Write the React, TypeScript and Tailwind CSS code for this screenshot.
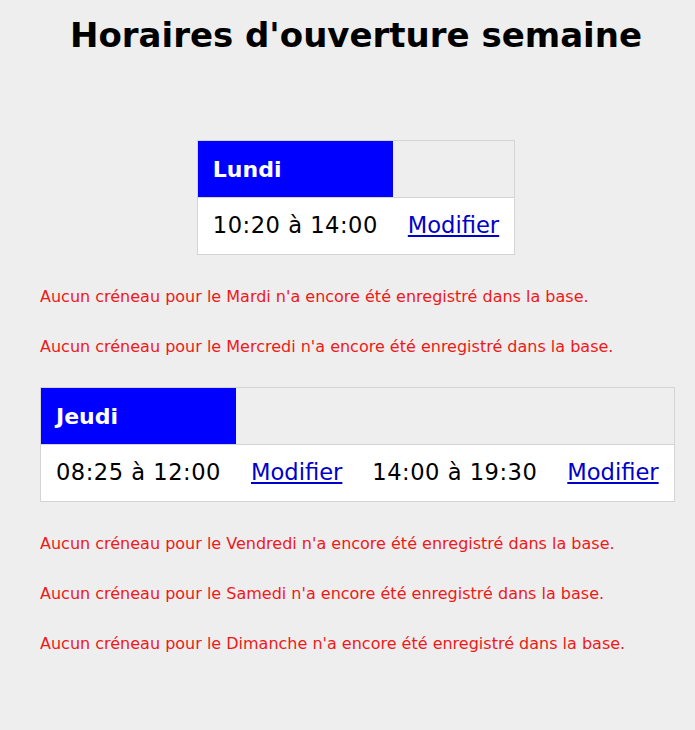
type Creneau = { debut: string; fin: string }

type Jour = { nom: string; creneaux: Creneau[] }

const jours: Jour[] = [
  { nom: 'Lundi', creneaux: [{ debut: '10:20', fin: '14:00' }] },
  { nom: 'Mardi', creneaux: [] },
  { nom: 'Mercredi', creneaux: [] },
  {
    nom: 'Jeudi',
    creneaux: [
      { debut: '08:25', fin: '12:00' },
      { debut: '14:00', fin: '19:30' },
    ],
  },
  { nom: 'Vendredi', creneaux: [] },
  { nom: 'Samedi', creneaux: [] },
  { nom: 'Dimanche', creneaux: [] },
]

// ─── Tableau d'un jour ────────────────────────────────────────────────────────

function TableJour({ jour }: { jour: Jour }) {
  const nbCols = jour.creneaux.length * 2
  return (
    <table className="mx-auto border-collapse border border-[#d4d4d4]">
      <thead>
        <tr>
          <th className="h-[57px] bg-[#0000ff] px-[15px] text-left text-[22px] font-bold text-white">
            {jour.nom}
          </th>
          <td colSpan={nbCols - 1} />
        </tr>
      </thead>
      <tbody>
        <tr className="border-t border-[#d4d4d4] bg-white">
          {jour.creneaux.flatMap((c) => [
            <td
              key={c.debut}
              className="h-[57px] whitespace-nowrap px-[15px] text-[22.6px] tracking-[0.5px] text-black"
            >
              {c.debut} à {c.fin}
            </td>,
            <td key={c.debut + '-m'} className="h-[57px] px-[15px] text-[22.6px]">
              <a href="#" className="text-[#0000cc] underline">
                Modifier
              </a>
            </td>,
          ])}
        </tr>
      </tbody>
    </table>
  )
}

export default function App() {
  return (
    <div className="min-h-[730px] bg-[#eeeeee] pl-[40px] pr-[23px] font-['DejaVu_Sans',sans-serif]">
      <h1 className="pt-[13px] text-center text-[34px] font-bold leading-[44px] text-black">
        Horaires d'ouverture semaine
      </h1>

      <div className="mt-[83px] flex flex-col pb-[40px]">
        {jours.map((jour) =>
          jour.creneaux.length > 0 ? (
            <div key={jour.nom} className="mb-[32px]">
              <TableJour jour={jour} />
            </div>
          ) : (
            <p key={jour.nom} className="mb-[30px] text-[16px] leading-[20px] text-[#f01818]">
              Aucun créneau pour le {jour.nom} n'a encore été enregistré dans la base.
            </p>
          )
        )}
      </div>
    </div>
  )
}
